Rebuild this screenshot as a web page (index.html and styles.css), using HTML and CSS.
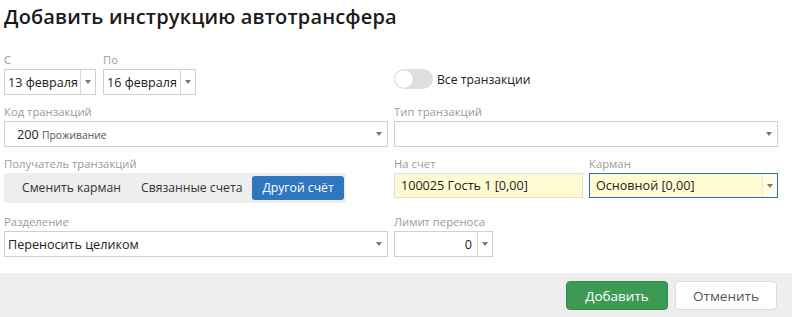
FILE: index.html
```html
<!DOCTYPE html>
<html lang="ru">
<head>
  <meta charset="UTF-8">
  <title>Добавить инструкцию автотрансфера</title>
  <link rel="stylesheet" href="styles.css">
</head>
<body>

  <div class="dialog">
    <h1 class="title">Добавить инструкцию автотрансфера</h1>

    <div class="form">
      <div class="row row-dates">
        <div class="col dates">
          <div class="field">
            <label>С</label>
            <div class="box date">
              <span class="value">13 февраля</span>
              <span class="btn-arrow"><i class="caret"></i></span>
            </div>
          </div>
          <div class="field">
            <label>По</label>
            <div class="box date">
              <span class="value">16 февраля</span>
              <span class="btn-arrow"><i class="caret"></i></span>
            </div>
          </div>
        </div>
        <div class="col toggle-col">
          <div class="toggle">
            <span class="track"><span class="knob"></span></span>
            <span class="toggle-text">Все транзакции</span>
          </div>
        </div>
      </div>

      <div class="row">
        <div class="col field">
          <label>Код транзакций</label>
          <div class="box select">
            <span class="value code"><b>200</b> <small>Проживание</small></span>
            <i class="caret"></i>
          </div>
        </div>
        <div class="col field">
          <label>Тип транзакций</label>
          <div class="box select">
            <span class="value"></span>
            <i class="caret"></i>
          </div>
        </div>
      </div>

      <div class="row row-target">
        <div class="col field">
          <label>Получатель транзакций</label>
          <div class="tabs">
            <span class="tab">Сменить карман</span>
            <span class="tab">Связанные счета</span>
            <span class="tab active">Другой счёт</span>
          </div>
        </div>
        <div class="col split">
          <div class="field">
            <label>На счет</label>
            <div class="box filled">
              <span class="value">100025 Гость 1 [0,00]</span>
            </div>
          </div>
          <div class="field">
            <label>Карман</label>
            <div class="box filled focused">
              <span class="value">Основной [0,00]</span>
              <span class="btn-arrow"><i class="caret"></i></span>
            </div>
          </div>
        </div>
      </div>

      <div class="row">
        <div class="col field">
          <label>Разделение</label>
          <div class="box select">
            <span class="value">Переносить целиком</span>
            <i class="caret"></i>
          </div>
        </div>
        <div class="col field">
          <label>Лимит переноса</label>
          <div class="box number">
            <span class="value">0</span>
            <span class="btn-arrow"><i class="caret"></i></span>
          </div>
        </div>
      </div>
    </div>

    <div class="footer">
      <button class="btn btn-ok">Добавить</button>
      <button class="btn btn-cancel">Отменить</button>
    </div>
  </div>

</body>
</html>
```

FILE: styles.css
```css
body {
  margin: 0;
  font-family: 'Open Sans', 'Noto Sans', sans-serif;
  color: #222;
  background-color: #fff;
}

.title {
  margin: 0;
  padding: 2px 0 0 4px;
  height: 50px;
  box-sizing: border-box;
  font-size: 20px;
  font-weight: 600;
  line-height: 30px;
  letter-spacing: 0.15px;
  color: #1a1a1a;
}

.form {
  padding: 2px 14px 0 4px;
}

.row {
  display: flex;
  gap: 6px;
  margin-bottom: 9px;
}

.row-target {
  margin-bottom: 11px;
}

.col {
  flex: 1;
  min-width: 0;
}

.field {
  display: flex;
  flex-direction: column;
}

label {
  font-size: 11.3px;
  line-height: 16px;
  color: #9a9a9a;
  margin-bottom: 1px;
  white-space: nowrap;
}

.dates {
  display: flex;
  gap: 7px;
}

.dates .field:first-child .box {
  width: 92px;
}

.dates .field:last-child .box {
  width: 93px;
}

.box {
  box-sizing: border-box;
  height: 26px;
  border: 1px solid #d0d0d0;
  background-color: #fff;
  display: flex;
  align-items: center;
  font-size: 12.6px;
}

.value {
  flex: 1;
  padding: 0 3px;
  white-space: nowrap;
  overflow: hidden;
}

.caret {
  display: inline-block;
  width: 0;
  height: 0;
  border-left: 3px solid transparent;
  border-right: 3px solid transparent;
  border-top: 4px solid #777;
}

.btn-arrow {
  width: 14px;
  height: 100%;
  border-left: 1px solid #d8d8d8;
  display: flex;
  align-items: center;
  justify-content: center;
}

.select .caret {
  margin-right: 5px;
}

.code {
  padding-left: 12px;
}

.code b {
  font-weight: 400;
}

.code small {
  font-size: 10.3px;
  color: #555;
}

.toggle-col {
  padding-top: 17px;
}

.toggle {
  display: flex;
  align-items: center;
  gap: 4px;
  font-size: 12.2px;
}

.track {
  position: relative;
  width: 39px;
  height: 20px;
  border-radius: 10px;
  background-color: #dedede;
}

.knob {
  position: absolute;
  left: 1px;
  top: 1px;
  width: 18px;
  height: 18px;
  border-radius: 50%;
  background-color: #fff;
  box-shadow: 0 0 1px rgba(0, 0, 0, 0.15);
}

.tabs {
  display: flex;
  align-items: center;
  width: 342px;
  height: 30px;
  box-sizing: border-box;
  padding: 0 3px 0 8px;
  background-color: #eeeeee;
  border-radius: 4px;
  font-size: 12.2px;
  white-space: nowrap;
}

.tab {
  flex-shrink: 0;
  padding: 0 10px;
  line-height: 24px;
  color: #333;
  border-radius: 3px;
}

.tab.active {
  margin-left: auto;
  padding: 0 10px;
  background-color: #2e77bf;
  color: #fff;
}

.split {
  display: flex;
  gap: 6px;
}

.split .field {
  flex: 1;
}

.filled {
  height: 25px;
  background-color: #fffbd3;
  border-color: #dedede;
}

.filled .value {
  padding-left: 6px;
}

.focused {
  border-color: #2d6fb3;
}

.focused .btn-arrow {
  border-left-color: #eee9c0;
  background-color: #fffde6;
}

.number {
  width: 99px;
}

.number .value {
  text-align: right;
  padding-right: 5px;
}

.footer {
  margin-top: 16px;
  height: 45px;
  background-color: #eeeeee;
  display: flex;
  justify-content: flex-end;
  align-items: center;
  gap: 7px;
  padding: 0 15px 1px 0;
}

.btn {
  width: 102px;
  height: 29px;
  border-radius: 4px;
  font-family: 'Open Sans', 'Noto Sans', sans-serif;
  font-size: 13.5px;
  cursor: pointer;
}

.btn-ok {
  background-color: #3d9a55;
  border: 1px solid #358a4b;
  color: #fff;
}

.btn-cancel {
  background-color: #fff;
  border: 1px solid #ddd;
  color: #555;
}
```
